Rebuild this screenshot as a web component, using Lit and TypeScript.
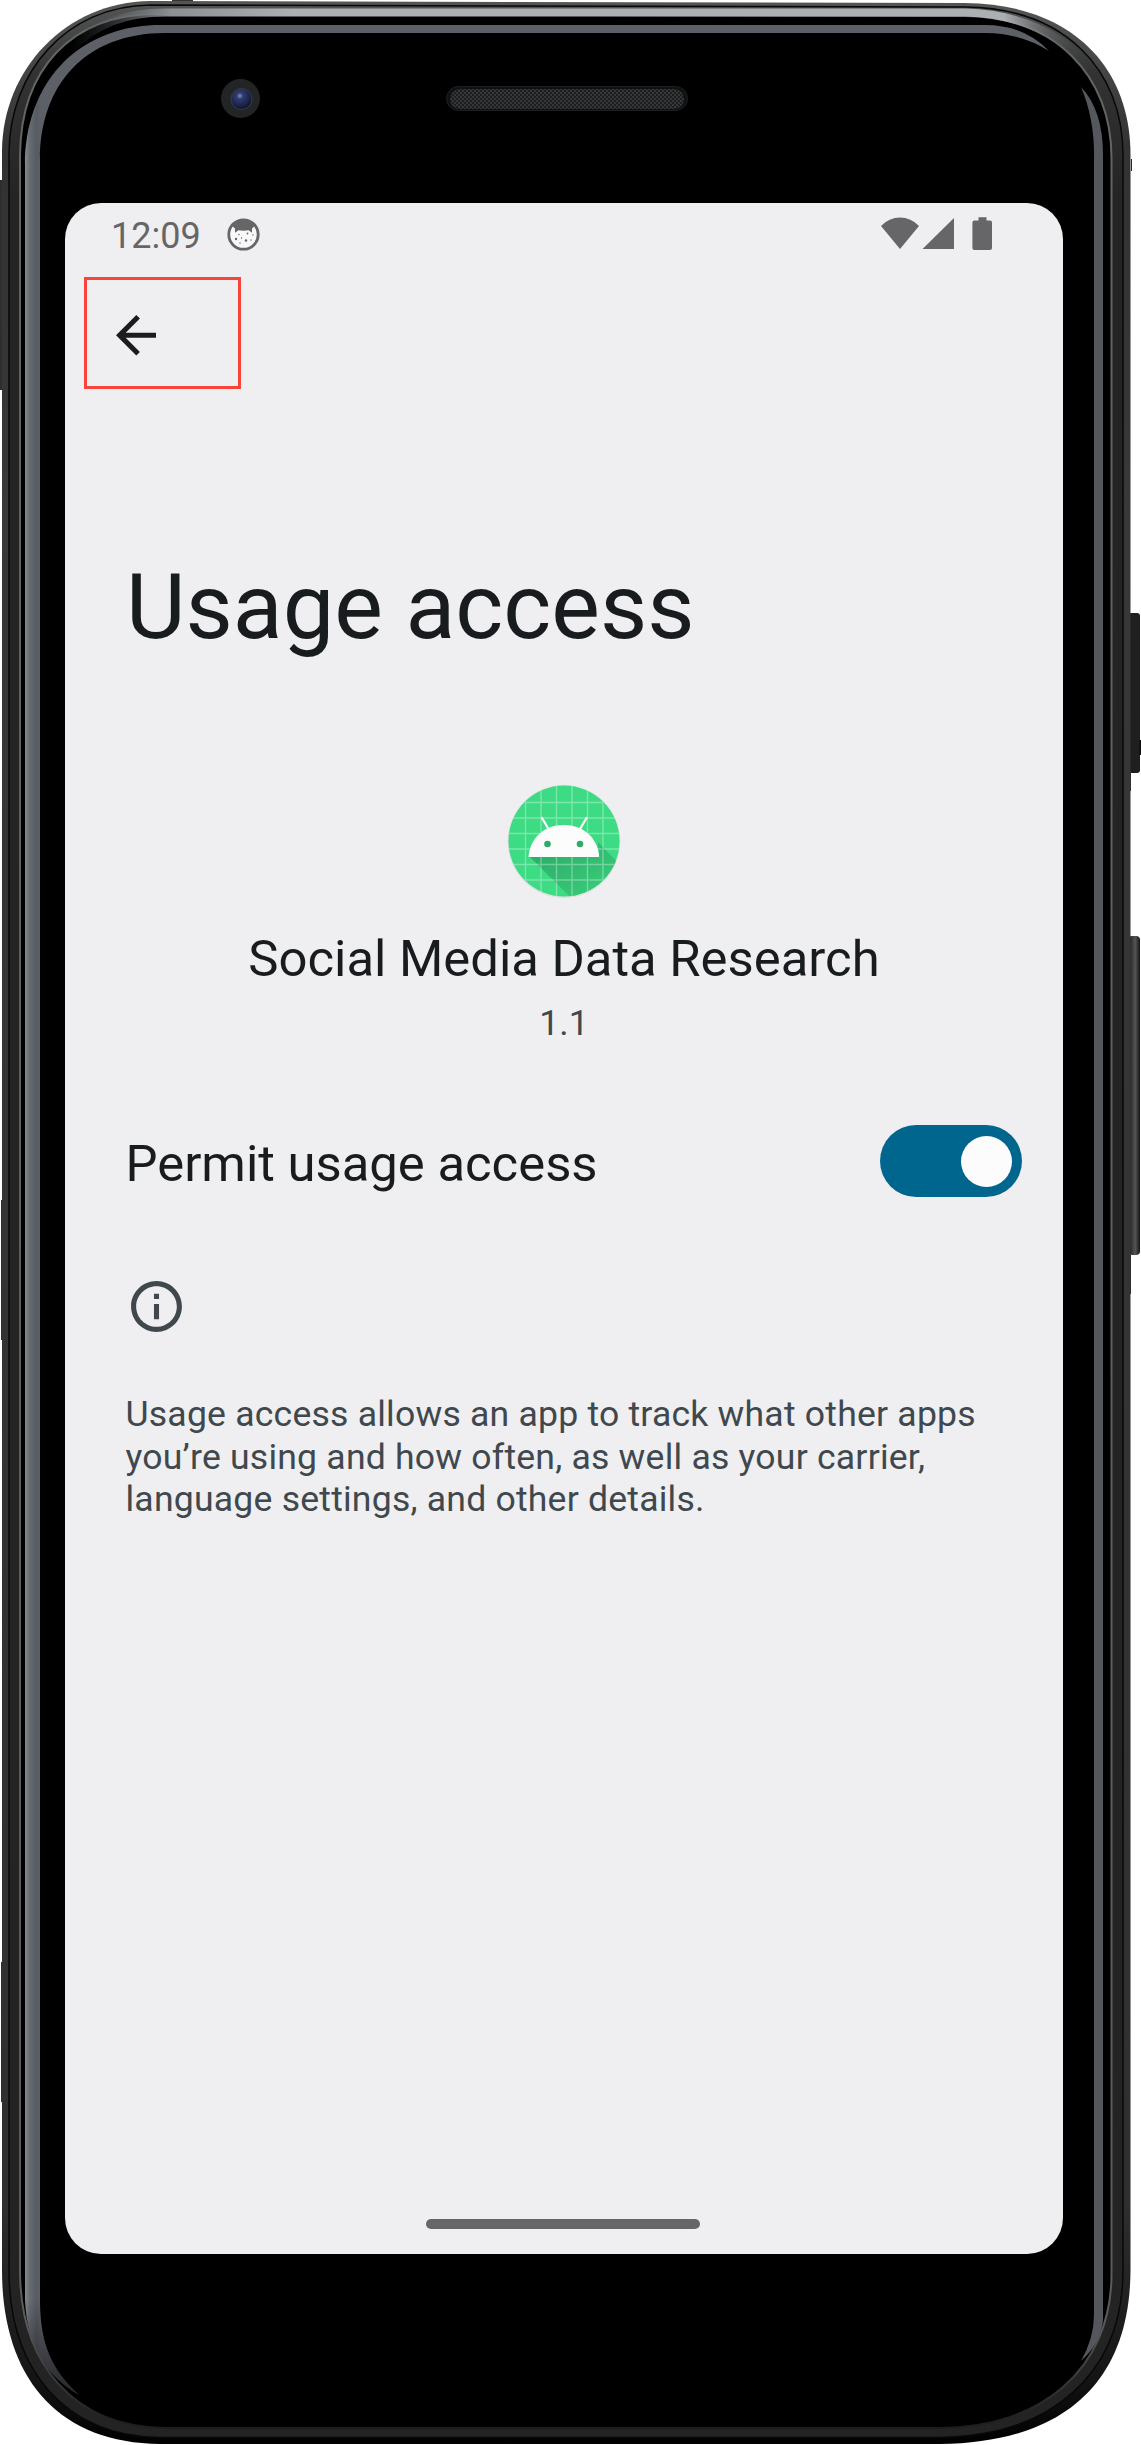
import { LitElement, html, css } from "lit";
import { customElement, property } from "lit/decorators.js";

@customElement("status-bar")
class StatusBar extends LitElement {
  static styles = css`
    :host { display: block; }
    .bar { display: flex; align-items: center; height: 63px; padding: 0 71.5px 0 46px; color: #666668; }
    .time { padding-top: 3px; font: 36px/60px Roboto, sans-serif; }
    .cat { margin-left: 26px; margin-top: -1px; }
    .right { margin-left: auto; margin-top: -2px; display: flex; align-items: center; }
    svg { display: block; }
  `;
  render() {
    return html`<div class="bar">
      <span class="time">12:09</span>
      <svg class="cat" width="33" height="33" viewBox="0 0 33 33">
        <circle cx="16.5" cy="16.5" r="14.7" fill="#f8f8f9" stroke="#666668" stroke-width="2.8"/>
        <path d="M4 7 Q9 1.2 16.5 1.2 T29 7 L25 10.5 V14.8 L21.6 12.3 Q16.5 13 11.4 12.3 L8 14.8 V10.5Z" fill="#666668"/>
        <g fill="#666668"><circle cx="12" cy="16.5" r=".7"/><circle cx="20.5" cy="15.5" r=".9"/><circle cx="26" cy="17" r=".7"/><circle cx="9" cy="21" r="1.2"/><circle cx="14.5" cy="20" r=".7"/><circle cx="19" cy="22.5" r="1.2"/><circle cx="24" cy="22" r=".7"/><circle cx="13" cy="25" r=".7"/></g>
      </svg>
      <div class="right">
        <svg width="111" height="33" viewBox="0 0 111 33" fill="#666668">
          <path d="M0 9 Q8 0.5 19 0.5 T38 9 L19 32Z"/>
          <path d="M41.5 32 L73 1 V32Z"/>
          <path d="M97.5 .3h8v3.2h3.5a2 2 0 0 1 2 2v25.4a2 2 0 0 1-2 2h-15.6a2 2 0 0 1-2-2V5.5a2 2 0 0 1 2-2H97.5z"/>
        </svg>
      </div>
    </div>`;
  }
}

@customElement("toggle-switch")
class ToggleSwitch extends LitElement {
  @property({ type: Boolean }) on = false;
  static styles = css`
    :host { display: block; }
    .track { box-sizing: border-box; display: flex; align-items: center; justify-content: flex-end; width: 142.5px; height: 72px; padding-right: 10px; border-radius: 36px; background: #00668d; }
    .thumb { width: 51px; height: 51px; border-radius: 50%; background: #fcfcfc; }
  `;
  render() {
    return html`<div class="track" role="switch" aria-checked=${this.on}><div class="thumb"></div></div>`;
  }
}

@customElement("app-root")
class AppRoot extends LitElement {
  static styles = css`
    :host { display: block; background: #fff; font-family: Roboto, sans-serif; }
    .stage { position: relative; box-sizing: border-box; width: 1141px; height: 2445px; padding: 203px 0 0 65px; overflow: hidden; }
    .shell { position: absolute; left: 0; top: 0; }
    .screen { position: relative; box-sizing: border-box; display: flex; flex-direction: column; width: 998px; height: 2051px; border-radius: 36px; background: #efeff1; overflow: hidden; color: #191c1e; }
    .back { box-sizing: border-box; width: 157px; height: 112px; margin: 11px 0 0 19px; border: 3px solid #f8443b; padding: 35px 0 0 28.5px; }
    .back svg, .app svg, .info svg { display: block; }
    .title { margin: 163px 0 0 61px; font-size: 91.7px; line-height: 110px; font-weight: 400; white-space: nowrap; }
    .app { display: flex; flex-direction: column; align-items: center; margin-top: 119px; }
    .name { margin-top: 28px; font-size: 50.8px; line-height: 60px; white-space: nowrap; }
    .version { margin-top: 13px; font-size: 35.6px; line-height: 42px; color: #40484d; }
    .row { display: flex; align-items: center; justify-content: space-between; margin-top: 81px; padding: 0 41px 0 60.5px; height: 72px; }
    .label { font-size: 50.8px; line-height: 60px; padding-top: 6px; white-space: nowrap; }
    .info { margin: 79px 0 0 60.5px; }
    .desc { margin: 56px 0 0 60.5px; font-size: 35.6px; line-height: 42.6px; letter-spacing: 0.21px; color: #40484d; white-space: nowrap; }
    .home { width: 274px; height: 10px; margin: auto 0 25px 361px; border-radius: 5px; background: #666668; }
  `;

  private shell() {
    return html`<svg class="shell" width="1141" height="2445" viewBox="0 0 1141 2445">
      <defs>
        <linearGradient id="rim" gradientUnits="userSpaceOnUse" x1="0" y1="0" x2="0" y2="2445">
          <stop offset="0" stop-color="#555654"/><stop offset=".06" stop-color="#323232"/><stop offset=".2" stop-color="#393738"/><stop offset=".9" stop-color="#302f30"/><stop offset=".97" stop-color="#161616"/><stop offset="1" stop-color="#000"/>
        </linearGradient>
        <linearGradient id="band" gradientUnits="userSpaceOnUse" x1="0" y1="0" x2="0" y2="2445">
          <stop offset="0" stop-color="#555758"/><stop offset=".03" stop-color="#333"/><stop offset=".08" stop-color="#242424"/><stop offset="1" stop-color="#232323"/>
        </linearGradient>
        <linearGradient id="edge" gradientUnits="userSpaceOnUse" x1="0" y1="0" x2="0" y2="2445">
          <stop offset="0" stop-color="#636464"/><stop offset=".95" stop-color="#5a5b5b"/><stop offset=".985" stop-color="#262626"/><stop offset="1" stop-color="#151515"/>
        </linearGradient>
        <linearGradient id="shine" gradientUnits="userSpaceOnUse" x1="70" x2="1085" y1="0" y2="0">
          <stop offset="0" stop-color="#45494c" stop-opacity="0"/><stop offset=".1" stop-color="#8d9093"/><stop offset=".22" stop-color="#adb0b3"/><stop offset=".92" stop-color="#adb0b3"/><stop offset="1" stop-color="#45494c" stop-opacity="0"/>
        </linearGradient>
        <linearGradient id="left" gradientUnits="userSpaceOnUse" x1="25" y1="0" x2="40" y2="0">
          <stop offset="0" stop-color="#85888c"/><stop offset=".35" stop-color="#656970"/><stop offset=".8" stop-color="#565a61"/><stop offset="1" stop-color="#5d6067"/>
        </linearGradient>
        <linearGradient id="tail" gradientUnits="userSpaceOnUse" x1="0" y1="2300" x2="0" y2="2395">
          <stop offset="0" stop-color="#000" stop-opacity="0"/><stop offset="1" stop-color="#000" stop-opacity=".6"/>
        </linearGradient>
        <linearGradient id="key" x1="0" x2="1" y1="0" y2="0">
          <stop offset="0" stop-color="#161616"/><stop offset=".6" stop-color="#555"/><stop offset="1" stop-color="#151515"/>
        </linearGradient>
        <radialGradient id="lens" cx=".42" cy=".35" r=".6">
          <stop offset="0" stop-color="#8590bd"/><stop offset=".25" stop-color="#303c6e"/><stop offset=".75" stop-color="#1b2550"/><stop offset="1" stop-color="#10162f"/>
        </radialGradient>
        <pattern id="mesh" width="4" height="4" patternUnits="userSpaceOnUse">
          <rect width="4" height="4" fill="#1c1d1e"/><rect width="2" height="2" fill="#353738"/><rect x="2" y="2" width="2" height="2" fill="#353738"/>
        </pattern>
      </defs>
      <rect x="1128" y="613" width="12" height="160" rx="3" fill="#1f1f1f"/>
      <rect x="1139" y="740" width="2" height="15" fill="#111"/>
      <rect x="1128" y="936" width="12" height="319" rx="4" fill="url(#key)"/>
      <path d="M1129 773h2v18h-2zM1129 1255h2v39h-2zM1131 159h1v12h-1z" fill="#2a2a2a"/>
      <path d="M0 180h3v210H0zM1 1200h2v140H1zM1 1962h2v140H1z" fill="#2e2e2e"/>
      <path d="M172 0h21v6h-21z" fill="#333"/>
      <path d="M150 1 L965 3 C1070 4 1130.5 65 1130.5 155 V2270 C1130 2390 1055 2443 940 2444 H160 C55 2443 2 2375 2 2270 V150 C3 70 65 2 150 1Z" fill="url(#rim)"/>
      <path d="M150 5 L965 7 C1065 8 1123 70 1123 155 V2270 C1123 2375 1050 2436 940 2437.5 H160 C65 2436 9 2370 9 2270 V152 C10 72 66 6 150 5Z" fill="url(#band)" stroke="#080808" stroke-width="1.5"/>
      <path d="M155 14 L965 16 C1055 17 1111.5 75 1111.5 158 V2275 C1111 2370 1040 2428 940 2428 H165 C75 2427 20 2365 20 2270 V155 C21 70 70 15 155 14Z" fill="#000" stroke="url(#edge)" stroke-width="2"/>
      <path d="M70 50 C95 24 125 12.5 165 12.5 H965 C1020 13.5 1060 35 1085 62" fill="none" stroke="url(#shine)" stroke-width="8"/>
      <path d="M155 25 C75 28 25 85 25 165 V2300 C27 2345 45 2375 79 2395 C52 2370 40 2345 40 2300 V160 C40 85 85 33 165 33 H985 Q1020 33 1049 51 Q1024 25 985 25Z" fill="url(#left)"/>
      <path d="M25 2300 C27 2345 45 2375 79 2395 C52 2370 40 2345 40 2300Z" fill="url(#tail)"/>
      <path d="M1081 87 Q1103 110 1103 155 V2320 Q1101 2343 1081 2361 Q1094 2338 1094 2315 V160 Q1095 120 1081 87Z" fill="#54575b"/>
      <circle cx="240.5" cy="98.5" r="19.5" fill="#232425"/>
      <circle cx="241.5" cy="99" r="10.5" fill="url(#lens)" stroke="#3a3d42"/>
      <rect x="446.5" y="86.5" width="241" height="24" rx="12" fill="#101112" stroke="#1d1f20"/>
      <rect x="450" y="89" width="234" height="20" rx="10" fill="url(#mesh)"/>
    </svg>`;
  }

  private droid() {
    const grid = [17.5, 33, 48.5, 64, 79.5, 95];
    return html`<svg width="120" height="120" viewBox="-4 -4 120 120">
      <defs>
        <clipPath id="disc"><circle cx="56" cy="56" r="55.5"/></clipPath>
        <linearGradient id="cast" x1="0" y1="0" x2="1" y2="1"><stop offset="0" stop-color="#2aa765"/><stop offset=".8" stop-color="#38c978"/></linearGradient>
      </defs>
      <circle cx="56" cy="56.5" r="56.5" fill="#dfe2e2"/>
      <circle cx="56" cy="56" r="55.5" fill="#3ddc84"/>
      <g clip-path="url(#disc)">
        <path d="M22 72 L62 112 H112 V80 L90 57 L91 71Z" fill="url(#cast)"/>
        <path d=${grid.map((p) => `M${p} 0V112M0 ${p}H112`).join("")} stroke="#fff" stroke-opacity=".32" stroke-width="1.4"/>
      </g>
      <path d="M34 33 L40.5 44 M78.5 33 L72 44" stroke="#fcfcfc" stroke-width="2.2" stroke-linecap="round"/>
      <path d="M20.5 72 C22 53 36 40 55.7 40 S90 53 91.2 72Z" fill="#fcfcfc"/>
      <circle cx="39.5" cy="59" r="3.3" fill="#2faa68"/><circle cx="72" cy="59" r="3.3" fill="#2faa68"/>
    </svg>`;
  }

  render() {
    return html`<div class="stage">
      ${this.shell()}
      <main class="screen">
        <status-bar></status-bar>
        <div class="back">
          <svg width="40.6" height="40.6" viewBox="4 4 16 16" fill="#1b1c1e"><path d="M20 11H7.83l5.59-5.59L12 4l-8 8 8 8 1.41-1.41L7.83 13H20v-2z"/></svg>
        </div>
        <h1 class="title">Usage access</h1>
        <section class="app">
          ${this.droid()}
          <div class="name">Social Media Data Research</div>
          <div class="version">1.1</div>
        </section>
        <section class="row"><div class="label">Permit usage access</div><toggle-switch on></toggle-switch></section>
        <section class="info">
          <svg width="61" height="61" viewBox="0 0 24 24" fill="#40484d"><path d="M11 7h2v2h-2zm0 4h2v6h-2zm1-9C6.48 2 2 6.48 2 12s4.48 10 10 10 10-4.48 10-10S17.52 2 12 2zm0 18c-4.41 0-8-3.59-8-8s3.59-8 8-8 8 3.59 8 8-3.59 8-8 8z"/></svg>
        </section>
        <div class="desc">Usage access allows an app to track what other apps<br>you’re using and how often, as well as your carrier,<br>language settings, and other details.</div>
        <div class="home"></div>
      </main>
    </div>`;
  }
}
